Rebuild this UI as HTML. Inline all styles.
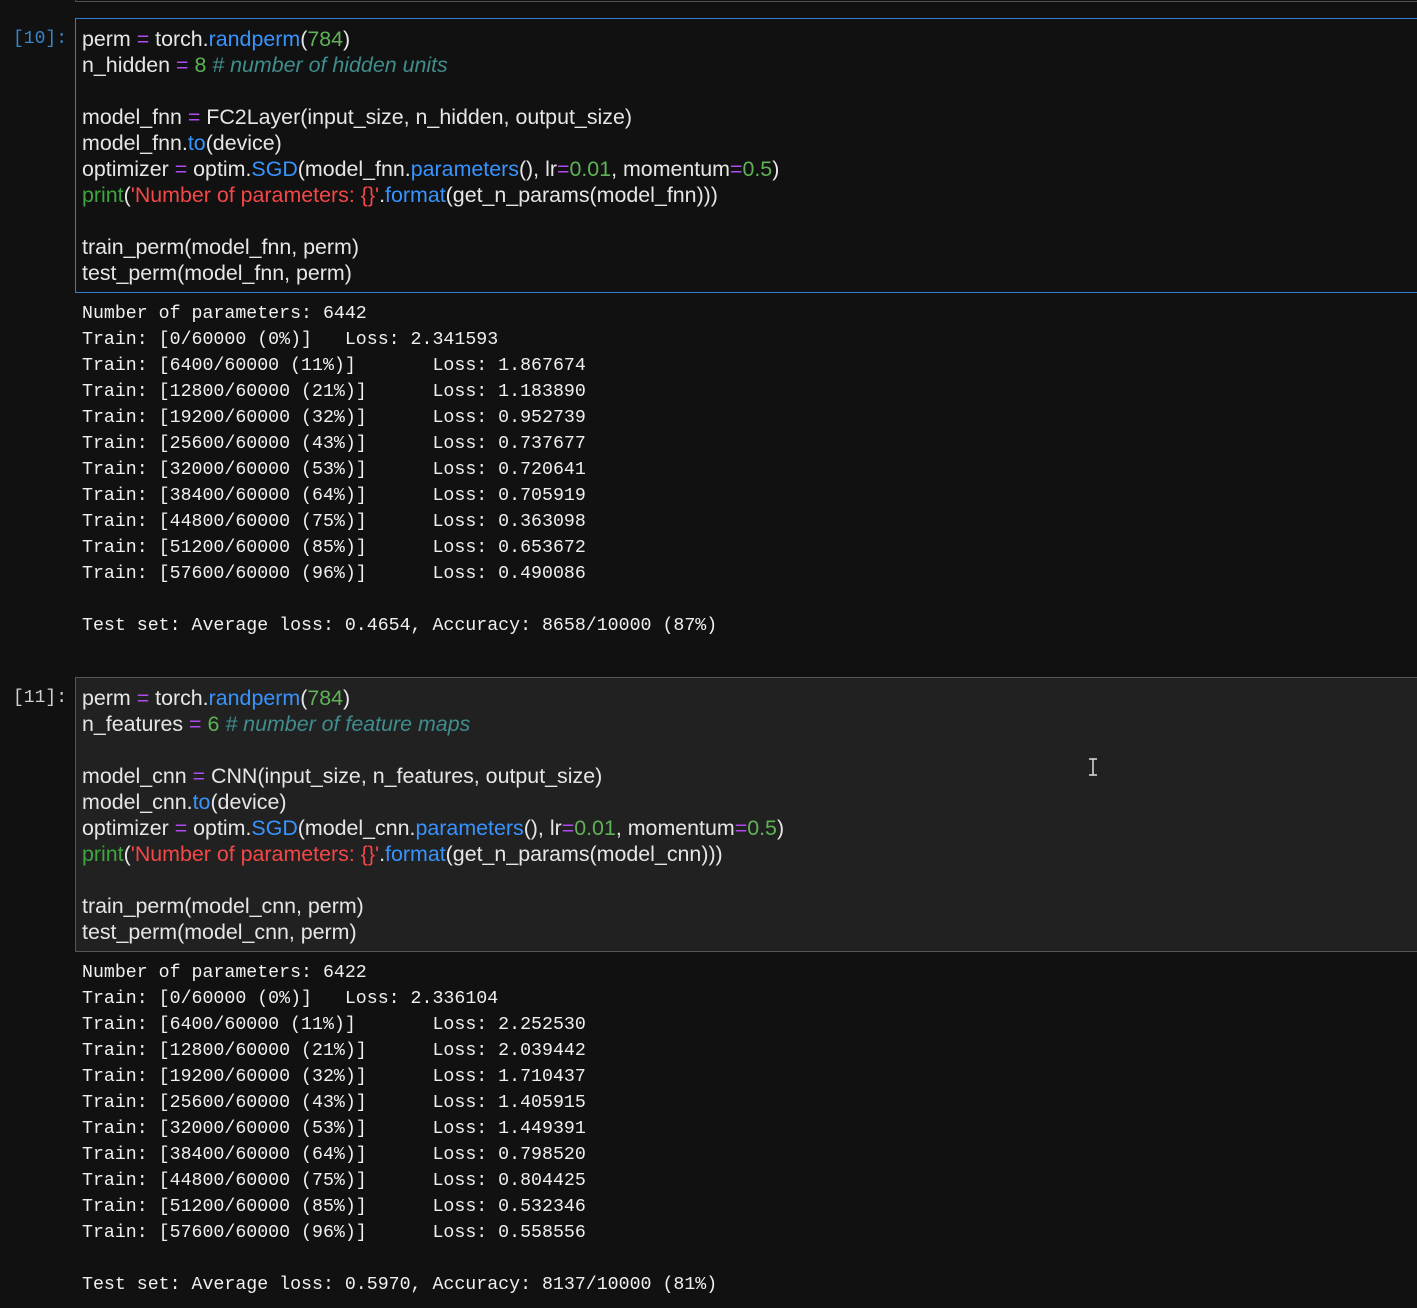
<!DOCTYPE html>
<html><head><meta charset="utf-8"><style>
html,body{margin:0;padding:0;background:#111111;width:1417px;height:1308px;overflow:hidden;position:relative}
.top{position:absolute;left:75px;top:-2px;width:1400px;height:4px;border:1px solid #505050;border-top:none;box-sizing:border-box}
.cell{position:absolute;left:75px;width:1400px;height:275px;box-sizing:border-box}
.c10{top:18px;border:1px solid #2d7fd0;background:#111}
.c11{top:677px;border:1px solid #555;background:#212121}
.code{position:absolute;left:6px;top:7px;font-family:"Liberation Sans",sans-serif;font-size:21.4px;line-height:26px;color:#e6e6e6;white-space:pre;letter-spacing:0}
.p{color:#b04cf0}.b{color:#3794ff}.g{color:#5fb356}.c{color:#3f8d8d;font-style:italic}.r{color:#f44747}.pg{color:#3fa63f}
.lbl{position:absolute;left:13px;font-family:"Liberation Mono",monospace;font-size:18px;line-height:26px}
.out{position:absolute;left:82px;font-family:"Liberation Mono",monospace;font-size:18.25px;line-height:26px;color:#f0f0f0;white-space:pre}
.cur{position:absolute;left:1088px;top:758px;width:10px;height:18px}
</style></head><body>
<div class="top"></div>
<div class="lbl" style="top:26px;color:#3a84c8">[10]:</div>
<div class="cell c10"><div class="code">perm <span class="p">=</span> torch.<span class="b">randperm</span>(<span class="g">784</span>)
n_hidden <span class="p">=</span> <span class="g">8</span> <span class="c"># number of hidden units</span>

model_fnn <span class="p">=</span> FC2Layer(input_size, n_hidden, output_size)
model_fnn.<span class="b">to</span>(device)
optimizer <span class="p">=</span> optim.<span class="b">SGD</span>(model_fnn.<span class="b">parameters</span>(), lr<span class="p">=</span><span class="g">0.01</span>, momentum<span class="p">=</span><span class="g">0.5</span>)
<span class="pg">print</span>(<span class="r">'Number of parameters: {}'</span>.<span class="b">format</span>(get_n_params(model_fnn)))

train_perm(model_fnn, perm)
test_perm(model_fnn, perm)</div></div>
<div class="out" style="top:301px">Number of parameters: 6442
Train: [0/60000 (0%)]	Loss: 2.341593
Train: [6400/60000 (11%)]	Loss: 1.867674
Train: [12800/60000 (21%)]	Loss: 1.183890
Train: [19200/60000 (32%)]	Loss: 0.952739
Train: [25600/60000 (43%)]	Loss: 0.737677
Train: [32000/60000 (53%)]	Loss: 0.720641
Train: [38400/60000 (64%)]	Loss: 0.705919
Train: [44800/60000 (75%)]	Loss: 0.363098
Train: [51200/60000 (85%)]	Loss: 0.653672
Train: [57600/60000 (96%)]	Loss: 0.490086

Test set: Average loss: 0.4654, Accuracy: 8658/10000 (87%)</div>
<div class="lbl" style="top:685px;color:#d0d0d0">[11]:</div>
<div class="cell c11"><div class="code">perm <span class="p">=</span> torch.<span class="b">randperm</span>(<span class="g">784</span>)
n_features <span class="p">=</span> <span class="g">6</span> <span class="c"># number of feature maps</span>

model_cnn <span class="p">=</span> CNN(input_size, n_features, output_size)
model_cnn.<span class="b">to</span>(device)
optimizer <span class="p">=</span> optim.<span class="b">SGD</span>(model_cnn.<span class="b">parameters</span>(), lr<span class="p">=</span><span class="g">0.01</span>, momentum<span class="p">=</span><span class="g">0.5</span>)
<span class="pg">print</span>(<span class="r">'Number of parameters: {}'</span>.<span class="b">format</span>(get_n_params(model_cnn)))

train_perm(model_cnn, perm)
test_perm(model_cnn, perm)</div></div>
<svg class="cur" viewBox="0 0 10 18"><path d="M1 1H9M5 1V17M1 17H9" stroke="#ddd" stroke-width="1.5" fill="none"/></svg>
<div class="out" style="top:960px">Number of parameters: 6422
Train: [0/60000 (0%)]	Loss: 2.336104
Train: [6400/60000 (11%)]	Loss: 2.252530
Train: [12800/60000 (21%)]	Loss: 2.039442
Train: [19200/60000 (32%)]	Loss: 1.710437
Train: [25600/60000 (43%)]	Loss: 1.405915
Train: [32000/60000 (53%)]	Loss: 1.449391
Train: [38400/60000 (64%)]	Loss: 0.798520
Train: [44800/60000 (75%)]	Loss: 0.804425
Train: [51200/60000 (85%)]	Loss: 0.532346
Train: [57600/60000 (96%)]	Loss: 0.558556

Test set: Average loss: 0.5970, Accuracy: 8137/10000 (81%)</div>
</body></html>
